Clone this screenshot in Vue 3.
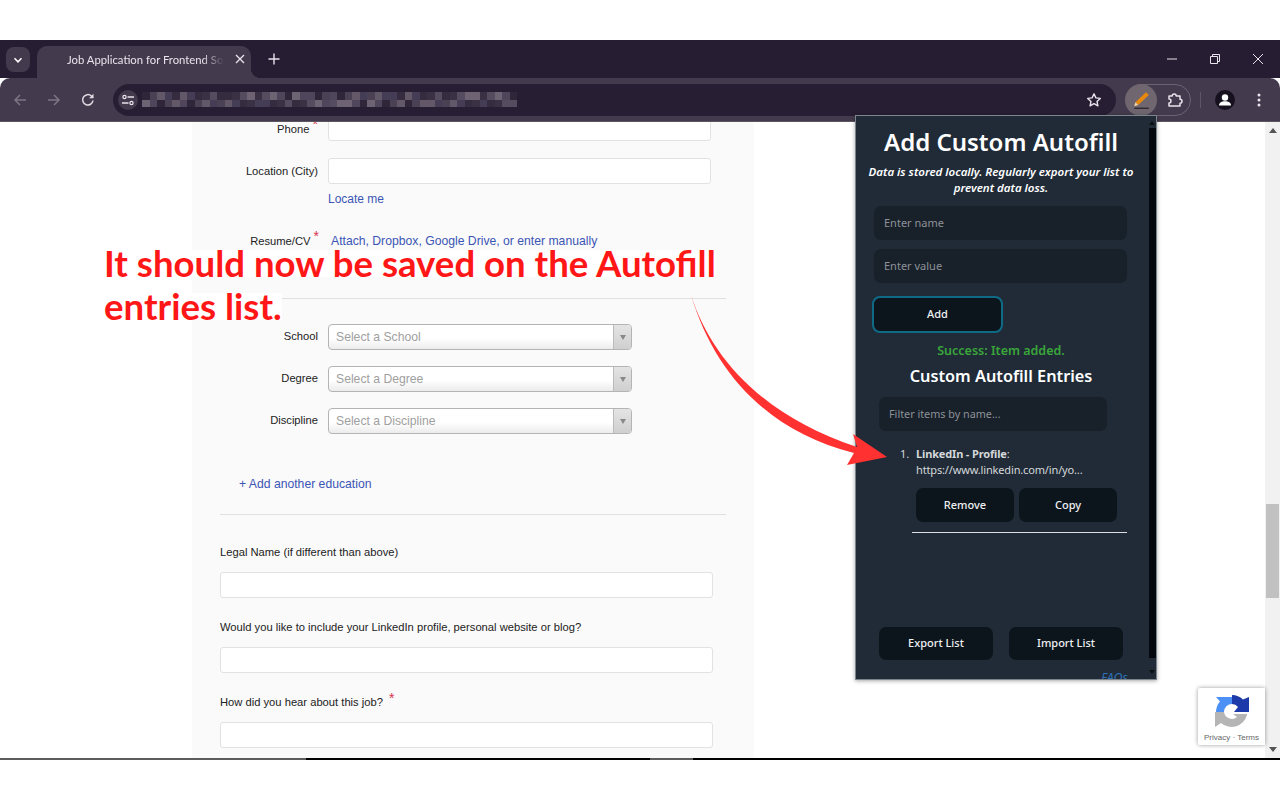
<script setup>
const shades = ['#2f2639', '#3a3145', '#4a4154', '#564c5f', '#625868', '#6e6373', '#453c55', '#50465c', '#352c40']
const mosaic = []
for (let i = 0; i < 100; i++) {
  mosaic.push(shades[(i * 7 + (i % 5) * 3 + (i % 11)) % shades.length])
}

const selects = [
  { label: 'School', text: 'Select a School' },
  { label: 'Degree', text: 'Select a Degree' },
  { label: 'Discipline', text: 'Select a Discipline' }
]
</script>

<template>
  <div class="slide">
    <div class="browser">
      <div class="tabstrip">
        <div class="tab-search">
          <svg width="10" height="10" viewBox="0 0 10 10"><path d="M1.5 3.2 5 6.8l3.5-3.6" fill="none" stroke="#fff" stroke-width="1.5" /></svg>
        </div>
        <div class="tab">
          <span class="tab-title">Job Application for Frontend So</span>
          <svg class="tab-close" width="10" height="10" viewBox="0 0 10 10"><path d="M1 1l8 8M9 1 1 9" stroke="#e8e4ec" stroke-width="1.3" /></svg>
        </div>
        <svg class="new-tab" width="12" height="12" viewBox="0 0 12 12"><path d="M6 .5v11M.5 6h11" stroke="#e8e4ec" stroke-width="1.4" /></svg>
        <div class="window-controls">
          <svg width="12" height="12" viewBox="0 0 12 12"><path d="M1 6h10" stroke="#e8e4ec" stroke-width="1" /></svg>
          <svg width="12" height="12" viewBox="0 0 12 12"><path d="M1.5 3.5h7v7h-7zM3.5 3.5v-2h7v7h-2" fill="none" stroke="#e8e4ec" stroke-width="1" /></svg>
          <svg width="12" height="12" viewBox="0 0 12 12"><path d="M1 1l10 10M11 1 1 11" stroke="#e8e4ec" stroke-width="1" /></svg>
        </div>
      </div>

      <div class="toolbar">
        <svg class="nav nav-back" width="16" height="16" viewBox="0 0 16 16"><path d="M14 8H3M8 3 3 8l5 5" fill="none" stroke="#7d7484" stroke-width="1.5" /></svg>
        <svg class="nav nav-fwd" width="16" height="16" viewBox="0 0 16 16"><path d="M2 8h11M8 3l5 5-5 5" fill="none" stroke="#7d7484" stroke-width="1.5" /></svg>
        <svg class="nav nav-reload" width="16" height="16" viewBox="0 0 16 16"><path d="M13 8.5A5.2 5.2 0 1 1 11.4 4L13 5.5" fill="none" stroke="#e0dce4" stroke-width="1.5" /><path d="M13.5 1.8v4.4H9.1z" fill="#e0dce4" /></svg>
        <div class="address">
          <div class="site-info">
            <svg width="14" height="14" viewBox="0 0 14 14"><circle cx="3.5" cy="4" r="1.6" fill="none" stroke="#e8e4ec" stroke-width="1.2" /><path d="M6.5 4h6.5M1 10h6.5" stroke="#e8e4ec" stroke-width="1.3" /><circle cx="10.5" cy="10" r="1.6" fill="none" stroke="#e8e4ec" stroke-width="1.2" /></svg>
          </div>
          <div class="mosaic">
            <i v-for="(c, i) in mosaic" :key="i" :style="{ background: c }"></i>
          </div>
          <svg class="star" width="16" height="16" viewBox="0 0 16 16"><path d="M8 1.8l1.9 4.1 4.4.5-3.3 3 .9 4.4L8 11.6l-3.9 2.2.9-4.4-3.3-3 4.4-.5z" fill="none" stroke="#e8e4ec" stroke-width="1.4" stroke-linejoin="round" /></svg>
        </div>
        <div class="ext-pill">
          <div class="ext-active">
            <svg width="20" height="20" viewBox="0 0 18 18"><path d="M13.500 2l2.500 2.500L6.500 13.500 4 11z" fill="#e8890c" /><path d="M4 11l2.500 2.500-3.600 1.100z" fill="#f3d9a8" /><path d="M3 16.400h13" stroke="#1d1a20" stroke-width="1" /></svg>
          </div>
          <svg class="puzzle" width="18" height="18" viewBox="0 0 18 18"><path d="M3 5h3.200a2 2 0 1 1 4 0H14v3.200a2 2 0 1 1 0 4V15H3v-3a2 2 0 0 0 0-4z" fill="none" stroke="#e8e4ec" stroke-width="1.5" stroke-linejoin="round" /></svg>
        </div>
        <div class="sep"></div>
        <div class="avatar">
          <svg width="20" height="20" viewBox="0 0 20 20"><circle cx="10" cy="7.500" r="3.200" fill="#fff" /><path d="M4 15.500c0-3 3-4.200 6-4.200s6 1.200 6 4.200z" fill="#fff" /></svg>
        </div>
        <svg class="menu" width="4" height="14" viewBox="0 0 4 14"><circle cx="2" cy="2" r="1.500" fill="#e8e4ec" /><circle cx="2" cy="7" r="1.500" fill="#e8e4ec" /><circle cx="2" cy="12" r="1.500" fill="#e8e4ec" /></svg>
      </div>

      <div class="content">
        <div class="page">
          <div class="panel">
            <div class="row row-phone">
              <label class="lbl">Phone <b class="req">*</b></label>
              <input class="field" type="text" />
            </div>
            <div class="row row-location">
              <label class="lbl">Location (City)</label>
              <input class="field" type="text" />
            </div>
            <a class="link locate">Locate me</a>
            <div class="row row-resume">
              <label class="lbl">Resume/CV <b class="req">*</b></label>
              <span class="link resume-links">Attach, Dropbox, Google Drive, or enter manually</span>
            </div>
            <hr class="rule rule-one" />
            <div class="select-rows">
              <div v-for="s in selects" :key="s.label" class="row">
                <label class="lbl">{{ s.label }}</label>
                <div class="select">
                  <span>{{ s.text }}</span>
                  <div class="select-arrow"><i></i></div>
                </div>
              </div>
            </div>
            <a class="link add-edu">+ Add another education</a>
            <hr class="rule rule-two" />
            <label class="q q-first">Legal Name (if different than above)</label>
            <input class="wide" type="text" />
            <label class="q">Would you like to include your LinkedIn profile, personal website or blog?</label>
            <input class="wide" type="text" />
            <label class="q">How did you hear about this job? <b class="req">*</b></label>
            <input class="wide" type="text" />
          </div>
        </div>
        <div class="page-scroll">
          <i class="tri-up"></i>
          <div class="page-track"><div class="page-thumb"></div></div>
          <i class="tri-down"></i>
        </div>

        <div class="recaptcha">
          <svg width="36" height="36" viewBox="0 0 36 36">
            <path d="M2 18A16 16 0 0 1 6 7.500L2 3h16v7a8 8 0 0 0-8 8z" fill="#4a90f5" />
            <path d="M18 1a16 16 0 0 1 11 4.500L35 3v15H20l4-5a8 8 0 0 0-6-3z" fill="#1c3aa9" />
            <path d="M1 18h9a8 8 0 0 0 13 5l-4-3h14v1a16 16 0 0 1-26 8l-6 4V18z" fill="#b5b5b5" />
          </svg>
          <span>Privacy · Terms</span>
        </div>
      </div>
      <div class="taskline"><i class="tl-a"></i><i class="tl-b"></i><i class="tl-c"></i></div>
    </div>

    <div class="note">
      <span>It should now be saved on the Autofill</span>
      <span>entries list.</span>
    </div>

    <div class="popup">
      <div class="popup-body">
        <h1>Add Custom Autofill</h1>
        <p class="hint">Data is stored locally. Regularly export your list to prevent data loss.</p>
        <input class="dark-input first" placeholder="Enter name" />
        <input class="dark-input second" placeholder="Enter value" />
        <button class="btn add">Add</button>
        <p class="success">Success: Item added.</p>
        <h2>Custom Autofill Entries</h2>
        <input class="dark-input filter" placeholder="Filter items by name..." />
        <ol class="entries">
          <li>
            <div class="entry-text"><strong>LinkedIn - Profile</strong>:<br />https://www.linkedin.com/in/yo...</div>
            <div class="entry-actions">
              <button class="btn small">Remove</button>
              <button class="btn small">Copy</button>
            </div>
          </li>
        </ol>
        <hr class="entry-rule" />
        <div class="list-actions">
          <button class="btn list">Export List</button>
          <button class="btn list">Import List</button>
        </div>
        <a class="faqs">FAQs</a>
      </div>
      <div class="popup-scroll">
        <i class="tri-up dark"></i>
        <div class="popup-thumb"></div>
        <i class="tri-down dark"></i>
      </div>
    </div>

    <svg class="arrow" width="1280" height="800" viewBox="0 0 1280 800">
      <path d="M691 295C710 355 760 415 857 447L853 434 887 457 847 465 854 453C770 432 715 375 691 295Z" fill="#ff3131" />
    </svg>
  </div>
</template>

<style scoped>
.slide {
  position: relative;
  width: 1280px;
  height: 800px;
  padding-top: 40px;
  box-sizing: border-box;
  overflow: hidden;
  background: #fff;
}

.browser {
  height: 720px;
  display: flex;
  flex-direction: column;
  background: #fff;
}

/* tab strip */
.tabstrip {
  height: 38px;
  flex: none;
  background: #271d33;
  display: flex;
  align-items: flex-end;
  position: relative;
}

.tab-search {
  width: 24px;
  height: 25px;
  margin: 0 7px 6px 6px;
  border-radius: 8px;
  background: #443a4d;
  display: flex;
  align-items: center;
  justify-content: center;
}

.tab {
  width: 214px;
  height: 32px;
  background: #443a4d;
  border-radius: 10px 10px 0 0;
  position: relative;
  font: 11.3px/28px Lato, sans-serif;
  color: #e8e4ec;
}

.tab::after {
  content: '';
  position: absolute;
  right: -10px;
  bottom: 0;
  width: 10px;
  height: 10px;
  background: radial-gradient(circle at 100% 0, transparent 10px, #443a4d 10.5px);
}

.tab-title {
  position: absolute;
  left: 30px;
  top: 0;
  width: 157px;
  overflow: hidden;
  white-space: nowrap;
  -webkit-mask-image: linear-gradient(90deg, #000 86%, transparent 100%);
  mask-image: linear-gradient(90deg, #000 86%, transparent 100%);
}

.tab-close {
  position: absolute;
  right: 6px;
  top: 8px;
}

.new-tab {
  margin: 0 0 13px 17px;
}

.window-controls {
  margin-left: auto;
  display: flex;
  gap: 31px;
  padding: 0 16px 13px 0;
}

/* toolbar */
.toolbar {
  height: 43px;
  flex: none;
  background: #443a4d;
  border-radius: 10px 10px 0 0;
  border-bottom: 1px solid #5c5560;
  display: flex;
  align-items: center;
  position: relative;
}

.nav {
  flex: none;
}

.nav-back {
  margin-left: 12px;
}

.nav-fwd {
  margin-left: 18px;
}

.nav-reload {
  margin-left: 18px;
}

.address {
  margin-left: 17px;
  width: 1003px;
  height: 32px;
  border-radius: 16px;
  background: #271e33;
  display: flex;
  align-items: center;
  position: relative;
}

.site-info {
  width: 20px;
  height: 20px;
  margin-left: 5px;
  border-radius: 50%;
  background: #443a4d;
  display: flex;
  align-items: center;
  justify-content: center;
}

.mosaic {
  margin-left: 4px;
  width: 375px;
  height: 15px;
  display: grid;
  grid-template-columns: repeat(50, 1fr);
  grid-auto-rows: 1fr;
}

.star {
  position: absolute;
  right: 14px;
  top: 8px;
}

.ext-pill {
  margin-left: 10px;
  width: 65px;
  height: 32px;
  box-sizing: border-box;
  border: 1px solid #6d6473;
  border-radius: 16px;
  display: flex;
  align-items: center;
}

.ext-active {
  width: 32px;
  height: 32px;
  margin-left: -2px;
  flex: none;
  border-radius: 50%;
  background: #6f6670;
  display: flex;
  align-items: center;
  justify-content: center;
}

.puzzle {
  margin-left: 9px;
}

.sep {
  width: 1px;
  height: 16px;
  margin-left: 9px;
  background: #5e5566;
}

.avatar {
  margin-left: 14px;
  width: 20px;
  height: 20px;
  border-radius: 50%;
  background: #17111f;
  overflow: hidden;
}

.menu {
  margin-left: 22px;
}

/* page */
.content {
  flex: 1;
  min-height: 0;
  display: flex;
  overflow: hidden;
  position: relative;
}

.page {
  flex: 1;
  padding-left: 192px;
  overflow: hidden;
}

.panel {
  width: 562px;
  height: 700px;
  padding: 0 28px;
  box-sizing: border-box;
  background: #fafafa;
  font: 12.2px/16px 'Liberation Sans', Arial, sans-serif;
  color: #333;
}

.row {
  display: flex;
  align-items: center;
  gap: 9px;
}

.row-phone {
  margin-top: -7px;
}

.row-phone .lbl {
  padding-top: 2px;
}

.row-location {
  margin-top: 17px;
}

.lbl {
  width: 98px;
  margin-right: 1px;
  flex: none;
  text-align: right;
  white-space: nowrap;
  font-size: 11.2px;
  color: #222;
}

.req {
  font-weight: normal;
  color: #d9304f;
  font-size: 14px;
  line-height: 10px;
  position: relative;
  top: -4px;
}

.field {
  width: 383px;
  height: 26px;
  box-sizing: border-box;
  border: 1px solid #e2e2e2;
  border-radius: 3px;
  background: #fff;
  outline: none;
}

.link {
  color: #3b55b5;
  display: block;
}

.locate {
  margin: 7px 0 0 108px;
  font-size: 12px;
}

.row-resume {
  margin-top: 26px;
  gap: 0;
}

.row-resume .lbl {
  margin-right: 0;
  width: 99px;
}

.resume-links {
  margin-left: 12px;
}

.rule {
  border: 0;
  border-top: 1px solid #e0e0e0;
  margin: 0;
}

.rule-one {
  margin-top: 49px;
}

.select-rows {
  margin-top: 25px;
  display: flex;
  flex-direction: column;
  gap: 16px;
}

.select-rows .lbl {
  padding-bottom: 2px;
}

.select {
  width: 304px;
  height: 26px;
  box-sizing: border-box;
  border: 1px solid #b4b4b4;
  border-radius: 4px;
  background: linear-gradient(#fff 55%, #ececec);
  color: #a0a0a0;
  display: flex;
  align-items: center;
  padding-left: 7px;
  overflow: hidden;
}

.select span {
  flex: 1;
}

.select-arrow {
  width: 18px;
  height: 100%;
  box-sizing: border-box;
  border-left: 1px solid #bbb;
  background: linear-gradient(#e4e4e4, #cfcfcf);
  display: flex;
  align-items: center;
  justify-content: center;
}

.select-arrow i {
  border: 3px solid transparent;
  border-top: 5px solid #888;
  border-bottom: 0;
}

.add-edu {
  margin: 42px 0 0 19px;
}

.rule-two {
  margin-top: 22px;
}

.q {
  display: block;
  margin: 21px 0 12px;
  white-space: nowrap;
  font-size: 11.2px;
  color: #222;
}

.q .req {
  margin-left: 3px;
  top: -3px;
}

.q-first {
  margin-top: 29px;
}

.wide {
  display: block;
  width: 493px;
  height: 26px;
  box-sizing: border-box;
  border: 1px solid #e2e2e2;
  border-radius: 3px;
  background: #fff;
  outline: none;
}

.page-scroll {
  width: 15px;
  flex: none;
  background: #f1f1f1;
  display: flex;
  flex-direction: column;
  align-items: center;
  padding: 6px 0;
  box-sizing: border-box;
}

.page-track {
  flex: 1;
  width: 100%;
  padding-top: 371px;
  box-sizing: border-box;
}

.page-thumb {
  width: 13px;
  height: 94px;
  margin-left: 1px;
  background: #c1c1c1;
}

.tri-up {
  border: 4px solid transparent;
  border-bottom: 5px solid #555;
  border-top: 0;
}

.tri-down {
  border: 4px solid transparent;
  border-top: 5px solid #555;
  border-bottom: 0;
}

.tri-up.dark,
.tri-down.dark {
  border-left-width: 3px;
  border-right-width: 3px;
  flex: none;
}

.tri-up.dark {
  border-bottom: 4px solid #0a0f14;
}

.tri-down.dark {
  border-top: 4px solid #0a0f14;
}

.recaptcha {
  position: absolute;
  left: 1198px;
  top: 566px;
  width: 67px;
  height: 57px;
  background: #fff;
  border-radius: 2px 0 0 2px;
  box-shadow: 0 0 4px rgba(0, 0, 0, 0.4);
  display: flex;
  flex-direction: column;
  align-items: center;
  font: 8px/10px 'Liberation Sans', Arial, sans-serif;
  color: #666;
  white-space: nowrap;
  padding-top: 6px;
  box-sizing: border-box;
}

.recaptcha svg {
  flex: none;
  margin-bottom: 3px;
}

.taskline {
  height: 2px;
  flex: none;
  background: #000;
  display: flex;
}

.tl-a {
  width: 306px;
  background: #5d5d5d;
}

.tl-b {
  width: 344px;
}

.tl-c {
  width: 43px;
  background: #5d5d5d;
}

/* annotation */
.note {
  position: absolute;
  left: 104px;
  top: 250px;
  font: 700 36.6px/27px Lato, sans-serif;
  color: #ff1616;
}

.note span {
  display: table;
  background: #fff;
  height: 27px;
  margin-bottom: 16px;
  white-space: nowrap;
}

.arrow {
  position: absolute;
  left: 0;
  top: 0;
  pointer-events: none;
}

/* extension popup */
.popup {
  position: absolute;
  left: 855px;
  top: 115px;
  width: 302px;
  height: 565px;
  box-sizing: border-box;
  border: 1px solid #7d858c;
  background: #202b37;
  display: flex;
  box-shadow: 0 1px 4px rgba(0, 0, 0, 0.35);
  font-family: 'Noto Sans', sans-serif;
  color: #fff;
  overflow: hidden;
}

.popup-body {
  width: 290px;
  flex: none;
  height: 100%;
  padding-top: 10px;
  box-sizing: border-box;
}

h1 {
  margin: 0;
  text-align: center;
  font-size: 24px;
  line-height: 32px;
  font-weight: 600;
}

.hint {
  margin: 6px 8px 0;
  text-align: center;
  font-size: 11.5px;
  line-height: 16px;
  font-weight: 600;
  font-style: italic;
}

.dark-input {
  display: block;
  box-sizing: border-box;
  height: 34px;
  border: 0;
  border-radius: 7px;
  background: #18202a;
  color: #fff;
  font: 11px 'Noto Sans', sans-serif;
  padding: 0 10px 2px;
  outline: none;
}

.dark-input::placeholder {
  color: #8d9298;
}

.first {
  margin: 10px 0 0 18px;
  width: 253px;
}

.second {
  margin: 9px 0 0 18px;
  width: 253px;
}

.filter {
  margin: 10px 0 0 23px;
  width: 228px;
  font-size: 10.8px;
}

.btn {
  display: block;
  box-sizing: border-box;
  border: 0;
  background: #0d151c;
  color: #eef0f2;
  font: 500 11px 'Noto Sans', sans-serif;
  border-radius: 7px;
  padding: 0 0 2px;
}

.add {
  margin: 13px 0 0 16px;
  width: 131px;
  height: 37px;
  border: 2px solid #0e6a85;
  border-radius: 8px;
}

.success {
  margin: 10px 0 0;
  text-align: center;
  font-size: 12.5px;
  line-height: 16px;
  font-weight: 600;
  color: #3aa63a;
}

h2 {
  margin: 6px 0 0;
  text-align: center;
  font-size: 16.3px;
  line-height: 22px;
  font-weight: 600;
}

.entries {
  margin: 15px 0 0;
  padding: 0 0 0 60px;
  list-style: none;
  font-size: 11px;
  line-height: 16px;
  color: #d5d8db;
}

.entries li {
  position: relative;
}

.entries li::before {
  content: counter(list-item) '.';
  position: absolute;
  left: -16px;
  top: 0;
}

.entry-text {
  white-space: nowrap;
  letter-spacing: -0.15px;
}

.entry-actions {
  margin-top: 10px;
  display: flex;
  gap: 5px;
}

.small {
  width: 98px;
  height: 34px;
}

.entry-rule {
  border: 0;
  border-top: 1px solid #dcdfe2;
  margin: 10px 0 0 56px;
  width: 215px;
}

.list-actions {
  margin: 94px 0 0 23px;
  display: flex;
  gap: 16px;
}

.list {
  width: 114px;
  height: 33px;
}

.faqs {
  display: block;
  margin: 10px 18px 0 0;
  text-align: right;
  font-size: 12.5px;
  line-height: 16px;
  font-style: italic;
  color: #2f6fb5;
}

.popup-scroll {
  width: 8px;
  margin-left: 2px;
  flex: none;
  height: 100%;
  display: flex;
  flex-direction: column;
  align-items: center;
  padding: 5px 0;
  box-sizing: border-box;
}

.popup-thumb {
  width: 7px;
  height: 530px;
  margin: 3px 0 12px;
  background: #05080f;
}
</style>
